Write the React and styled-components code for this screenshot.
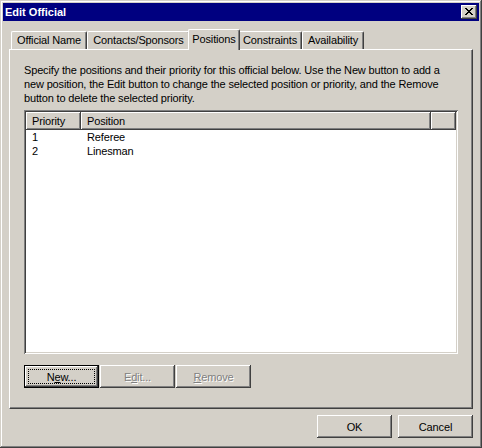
import styled, { createGlobalStyle } from 'styled-components'

const GlobalStyle = createGlobalStyle`
    html, body {
        margin: 0;
        padding: 0;
        background: #d4d0c8;
    }
    body {
        font-family: "Liberation Sans", Arial, sans-serif;
        font-size: 11px;
        letter-spacing: -0.15px;
        color: #000;
    }
`

const face = '#d4d0c8'

const Window = styled.div`
    width: 482px;
    height: 448px;
    box-sizing: border-box;
    padding: 3px;
    background: ${face};
    box-shadow: inset -1px -1px #404040, inset 1px 1px ${face},
        inset -2px -2px #808080, inset 2px 2px #fff;
    display: flex;
    flex-direction: column;
`
const TitleBar = styled.div`
    height: 18px;
    background: #000080;
    color: #fff;
    display: flex;
    align-items: center;
    justify-content: space-between;
    padding: 0 2px;
`
const Title = styled.span`
    font-weight: bold;
    font-size: 11px;
    letter-spacing: 0;
`
const CloseButton = styled.div`
    width: 16px;
    height: 14px;
    box-sizing: border-box;
    background: ${face};
    box-shadow: inset -1px -1px #404040, inset 1px 1px #fff,
        inset -2px -2px #808080, inset 2px 2px ${face};
    display: flex;
    align-items: center;
    justify-content: center;
    padding: 0 1px 1px 0;
`
const Body = styled.div`
    padding: 8px 6px 0;
`
const TabStrip = styled.div`
    height: 20px;
    display: flex;
    align-items: flex-end;
    padding-left: 2px;
`
const Tab = styled.div`
    width: ${p => p.$w}px;
    height: ${p => (p.$active ? 21 : 18)}px;
    box-sizing: border-box;
    margin: ${p => (p.$active ? '0 -2px -1px' : '0')};
    padding-bottom: ${p => (p.$active ? 3 : 1)}px;
    position: relative;
    z-index: ${p => (p.$active ? 2 : 1)};
    background: ${face};
    border-top: 1px solid #fff;
    border-left: 1px solid #fff;
    border-right: 1px solid #404040;
    border-radius: 2px 2px 0 0;
    box-shadow: inset -1px 0 #808080;
    display: flex;
    align-items: center;
    justify-content: center;
    white-space: nowrap;
`
const Panel = styled.div`
    height: 360px;
    box-sizing: border-box;
    padding: 13px 14px 0;
    border-top: 1px solid #fff;
    border-left: 1px solid #fff;
    border-right: 1px solid #404040;
    border-bottom: 1px solid #404040;
    box-shadow: inset -1px -1px #808080;
    display: flex;
    flex-direction: column;
`
const Description = styled.p`
    margin: 0;
    line-height: 14px;
    white-space: nowrap;
`
const ListView = styled.div`
    margin-top: 5px;
    height: 244px;
    box-sizing: border-box;
    background: #fff;
    box-shadow: inset 1px 1px #808080, inset -1px -1px #fff,
        inset 2px 2px #404040, inset -2px -2px ${face};
    padding: 2px;
`
const HeaderRow = styled.div`
    display: flex;
    height: 18px;
`
const HeaderCell = styled.div`
    width: ${p => p.$w}px;
    flex: ${p => (p.$fill ? 1 : 'none')};
    box-sizing: border-box;
    background: ${face};
    padding-left: 6px;
    display: flex;
    align-items: center;
    box-shadow: inset -1px -1px #404040, inset 1px 1px #fff,
        inset -2px -2px #808080;
`
const Row = styled.div`
    display: grid;
    grid-template-columns: 55px 350px;
    line-height: 14px;
`
const Cell = styled.div`
    padding-left: 6px;
`
const ButtonRow = styled.div`
    display: flex;
    gap: 1px;
    margin-top: 11px;
`
const Button = styled.div`
    width: 75px;
    height: 23px;
    box-sizing: border-box;
    background: ${face};
    display: flex;
    align-items: center;
    justify-content: center;
    position: relative;
    color: ${p => (p.$disabled ? '#808080' : '#000')};
    text-shadow: ${p => (p.$disabled ? '1px 1px #fff' : 'none')};
    border: ${p => (p.$default ? '1px solid #000' : 'none')};
    box-shadow: ${p =>
        p.$default
            ? 'inset -1px -1px #404040, inset 1px 1px #fff, inset -2px -2px #808080'
            : `inset -1px -1px #404040, inset 1px 1px #fff, inset -2px -2px #808080, inset 2px 2px ${face}`};
`
const FocusRing = styled.span`
    position: absolute;
    inset: 3px;
    border: 1px dotted #000;
`
const Label = styled.span`
    position: relative;
`
const Footer = styled.div`
    display: flex;
    justify-content: flex-end;
    gap: 6px;
    padding-top: 6px;
`

const xPixels = [
    [0, 1, 6, 7],
    [1, 2, 5, 6],
    [2, 3, 4, 5],
    [3, 4],
    [2, 3, 4, 5],
    [1, 2, 5, 6],
    [0, 1, 6, 7],
]

const CloseIcon = () => (
    <svg width="8" height="7" viewBox="0 0 8 7" shapeRendering="crispEdges">
        {xPixels.map((cols, y) =>
            cols.map(x => <rect key={`${x}-${y}`} x={x} y={y} width="1" height="1" fill="#000" />)
        )}
    </svg>
)

const tabs = [
    { name: 'Official Name', w: 76 },
    { name: 'Contacts/Sponsors', w: 103 },
    { name: 'Positions', w: 52, active: true },
    { name: 'Constraints', w: 64 },
    { name: 'Availability', w: 62 },
]

const positions = [
    { priority: 1, name: 'Referee' },
    { priority: 2, name: 'Linesman' },
]

const App = () => {
    return (
        <>
            <GlobalStyle />
            <Window>
                <TitleBar>
                    <Title>Edit Official</Title>
                    <CloseButton><CloseIcon /></CloseButton>
                </TitleBar>
                <Body>
                    <TabStrip>
                        {tabs.map(tab => (
                            <Tab key={tab.name} $w={tab.w} $active={tab.active}>{tab.name}</Tab>
                        ))}
                    </TabStrip>
                    <Panel>
                        <Description>
                            Specify the positions and their priority for this official below. Use the New button to add a<br />
                            new position, the Edit button to change the selected position or priority, and the Remove<br />
                            button to delete the selected priority.
                        </Description>
                        <ListView>
                            <HeaderRow>
                                <HeaderCell $w={55}>Priority</HeaderCell>
                                <HeaderCell $w={350}>Position</HeaderCell>
                                <HeaderCell $fill />
                            </HeaderRow>
                            {positions.map(p => (
                                <Row key={p.priority}>
                                    <Cell>{p.priority}</Cell>
                                    <Cell>{p.name}</Cell>
                                </Row>
                            ))}
                        </ListView>
                        <ButtonRow>
                            <Button $default>
                                <FocusRing />
                                <Label>N<u>e</u>w...</Label>
                            </Button>
                            <Button $disabled><Label>E<u>d</u>it...</Label></Button>
                            <Button $disabled><Label><u>R</u>emove</Label></Button>
                        </ButtonRow>
                    </Panel>
                    <Footer>
                        <Button>OK</Button>
                        <Button>Cancel</Button>
                    </Footer>
                </Body>
            </Window>
        </>
    )
}

export default App
